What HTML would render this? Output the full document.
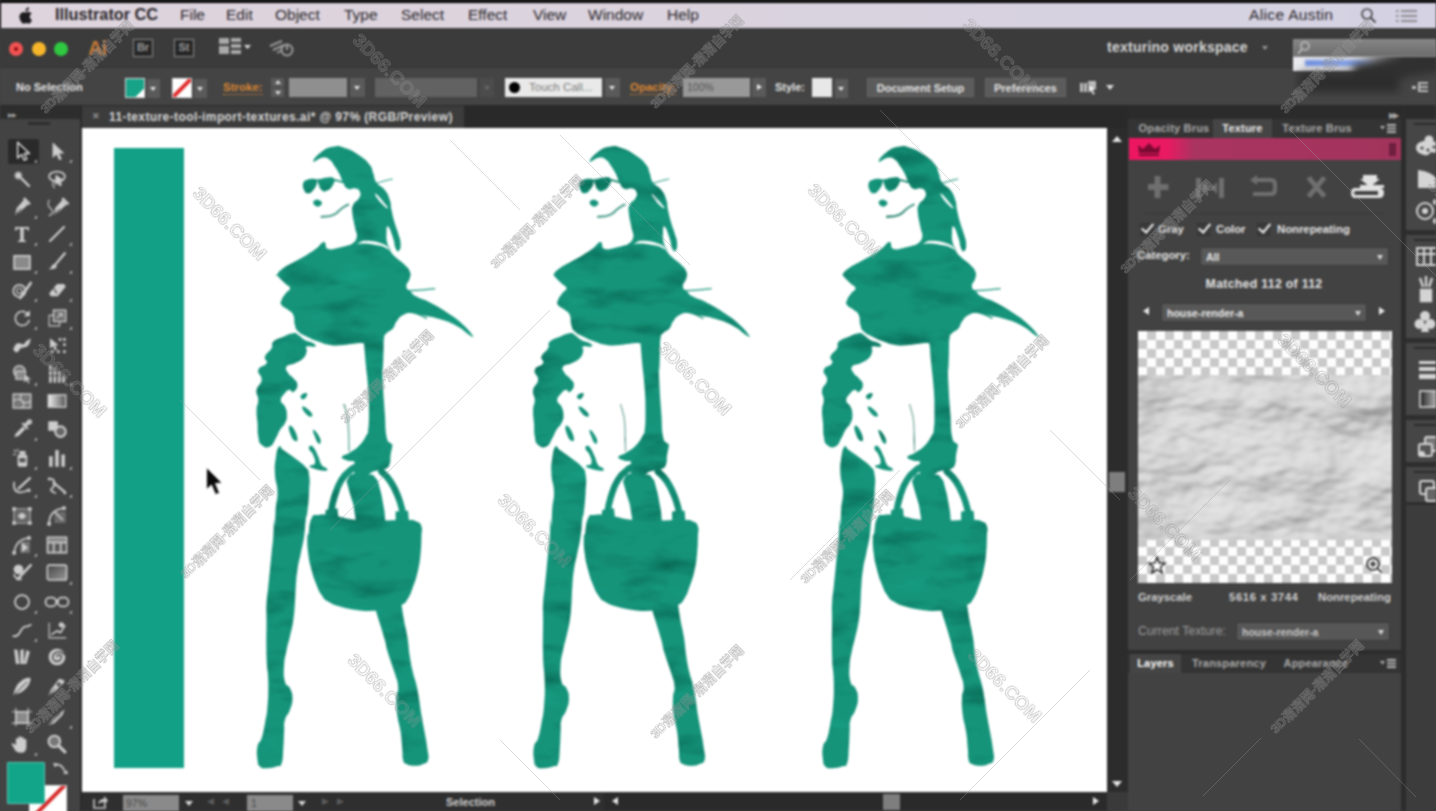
<!DOCTYPE html>
<html>
<head>
<meta charset="utf-8">
<title>Illustrator CC</title>
<style>
*{box-sizing:border-box;margin:0;padding:0}
html,body{width:1436px;height:811px;overflow:hidden;background:#3f3f3f;font-family:"Liberation Sans",sans-serif;}
body{position:relative}
#wrap{position:absolute;left:-20px;top:-20px;width:1476px;height:851px;background:#3f3f3f;filter:blur(1px)}
#root{position:absolute;left:20px;top:20px;width:1436px;height:811px;overflow:visible}
.abs{position:absolute}
#topblack{left:0;top:0;width:1436px;height:28px;background:#050505}
#menubar{left:1px;top:3px;width:1435px;height:25px;background:linear-gradient(90deg,#ded4dd 0,#dbd3de 45%,#d4d2e3 100%);color:#2a272b;font-size:15.5px;}
#menubar span{position:absolute;top:3px;white-space:nowrap}
#menubar span.b{font-size:16.3px;top:2px}
#appbar{left:0;top:28px;width:1436px;height:39px;background:#3b3b3b}
#ctrlbar{left:0;top:67px;width:1436px;height:38px;background:#444444;border-top:1px solid #333}
#tabrow{left:0;top:105px;width:1436px;height:23px;background:#292929}
#tab{left:82px;top:106px;width:382px;height:22px;background:#3c3c3c;color:#d8d8d8;font-size:11px;font-weight:bold}
#toolbar{left:0;top:119px;width:80px;height:692px;background:#434343}
#toolhead{left:0;top:106px;width:80px;height:13px;background:#2d2d2d}
#canvas{left:82px;top:128px;width:1025px;height:664px;background:#fff;overflow:hidden}
#vscroll{left:1107px;top:128px;width:21px;height:664px;background:#2c2c2c}
#status{left:82px;top:792px;width:1046px;height:19px;background:#2f2f2f}
#rpanel{left:1128px;top:106px;width:273px;height:705px;background:#424242}
#dock{left:1401px;top:106px;width:35px;height:705px;background:#464646;border-left:5px solid #2c2c2c;overflow:hidden}
.ibox{width:20px;height:18px;border:1.500px solid #8d8d8d;background:#262626;color:#9a9a9a;font-size:11px;font-weight:bold;text-align:center;line-height:15px}
.dd{height:19px;background:#5a5a5a}
.dd::after{content:"";position:absolute;left:50%;top:8px;margin-left:-3.500px;border:3.500px solid transparent;border-top:4.500px solid #e6e6e6;border-bottom:0}
.dd.dim{background:#4c4c4c}.dd.dim::after{border-top-color:#6a6a6a}
.btn{height:19px;background:#5b5b5b;color:#e4e4e4;font-size:11px;font-weight:bold;text-align:center;line-height:19px;white-space:nowrap;border:1px solid #666}
.ptab{height:19px;color:#a9a9a9;font-size:11px;font-weight:bold;text-align:center;line-height:19px;white-space:nowrap;letter-spacing:.2px}
.ptab.act{background:#454545;color:#efefef}
.lbl{color:#e2e2e2;font-size:11.300px;font-weight:bold;white-space:nowrap;line-height:13px}
.cb{width:13px;height:13px;background:#3a3a3a;border:1px solid #333}
.cb::after{content:"";position:absolute;left:3px;top:-3px;width:5px;height:10px;border:solid #f0f0f0;border-width:0 2px 2px 0;transform:rotate(40deg)}
.sel{height:19px;background:#585858;color:#e8e8e8;font-size:10.500px;font-weight:bold;line-height:18px;padding-left:5px;border:1px solid #3a3a3a;border-radius:2px}
.sel::after{content:"";position:absolute;right:5px;top:7px;border:3.500px solid transparent;border-top:5px solid #d8d8d8;border-bottom:0}
.grip{left:8px;width:24px;height:2px;background:#2a2a2a}
</style>
</head>
<body>
<div id="wrap"><div id="root">
<div id="topblack" class="abs"></div>
<div id="menubar" class="abs">
<svg class="abs" style="left:17.500px;top:3.500px" width="14" height="17" viewBox="0 0 17 20"><path d="M12 0q.3 2-1 3.500t-3 1.400q-.2-1.800 1.100-3.300T12 0z M8.300 6.200q1.200 0 2.500-.8 2.800-.3 4.500 2.100-2.400 1.500-2.300 4 .1 2.900 2.900 4.100-1.800 4.300-4 4.300-1 0-2-.5t-2.200 0q-1.300.6-2 .5-2.300-.2-4.200-4.200t-.3-7q1.400-2.500 3.900-2.600 1 0 3.200.1z" fill="#1d1b1e"/></svg>
<svg class="abs" style="left:1359px;top:4px" width="17" height="17" viewBox="0 0 17 17"><circle cx="7" cy="7" r="5" fill="none" stroke="#4a474b" stroke-width="1.700"/><path d="M10.500 10.500l5 5" stroke="#4a474b" stroke-width="2"/></svg>
<svg class="abs" style="left:1395px;top:6px" width="22" height="14" viewBox="0 0 22 14"><g fill="#8e8a90"><rect x="0" y="1" width="2.500" height="2"/><rect x="5" y="1" width="16" height="2"/><rect x="0" y="6" width="2.500" height="2"/><rect x="5" y="6" width="16" height="2"/><rect x="0" y="11" width="2.500" height="2"/><rect x="5" y="11" width="16" height="2"/></g></svg>
<span class="b" style="left:54px;font-weight:bold">Illustrator CC</span>
<span style="left:179px">File</span>
<span style="left:225px">Edit</span>
<span style="left:274px">Object</span>
<span style="left:343px">Type</span>
<span style="left:400px">Select</span>
<span style="left:467px">Effect</span>
<span style="left:532px">View</span>
<span style="left:587px">Window</span>
<span style="left:666px">Help</span>
<span style="left:1248px;letter-spacing:.35px">Alice Austin</span>
</div>
<div id="appbar" class="abs">
<div class="abs" style="left:9px;top:14px;width:14px;height:14px;border-radius:50%;background:#f25353"></div>
<div class="abs" style="left:14px;top:19px;width:4px;height:4px;border-radius:50%;background:#8a1010"></div>
<div class="abs" style="left:31.5px;top:14px;width:14px;height:14px;border-radius:50%;background:#f6b52b"></div>
<div class="abs" style="left:54px;top:14px;width:14px;height:14px;border-radius:50%;background:#2fc840"></div>
<div class="abs" style="left:88px;top:9px;font-size:20px;font-weight:bold;color:#c57a38;letter-spacing:-1px">Ai</div>
<div class="abs ibox" style="left:133px;top:11px">Br</div>
<div class="abs ibox" style="left:174px;top:11px">St</div>
<svg class="abs" style="left:219px;top:9px" width="36" height="20" viewBox="0 0 36 20"><g fill="#a9a9a9"><rect x="0" y="1" width="10" height="6"/><rect x="0" y="9" width="10" height="8"/><rect x="12" y="1" width="10" height="4"/><rect x="12" y="7" width="10" height="4"/><rect x="12" y="13" width="10" height="4"/></g><path d="M25 8h7l-3.500 4z" fill="#ddd"/></svg>
<svg class="abs" style="left:268px;top:9px" width="28" height="22" viewBox="0 0 28 22"><g fill="none" stroke="#9a9a9a" stroke-width="2"><path d="M2 9 L14 4 M5 13 L16 8 M9 16 L14 13"/><circle cx="19" cy="13" r="5.500"/><path d="M19 7v6"/></g></svg>
<div class="abs" style="left:1107px;top:11px;font-size:14px;font-weight:bold;color:#d6d6d6;letter-spacing:0.25px;white-space:nowrap">texturino workspace</div>
<div class="abs" style="left:1262px;top:18px;border:3px solid transparent;border-top:4px solid #999"></div>
<div class="abs" style="left:1293px;top:11px;width:143px;height:18px;background:linear-gradient(#858585,#6c6c6c);border:1px solid #8d8d8d"></div>
<svg class="abs" style="left:1296px;top:12px" width="16" height="16" viewBox="0 0 16 16"><circle cx="9" cy="6" r="4" fill="none" stroke="#bbb" stroke-width="1.600"/><path d="M6 9L2 14" stroke="#bbb" stroke-width="2"/></svg>
</div>
<div id="ctrlbar" class="abs">
<div class="abs" style="left:16px;top:13px;font-size:11px;font-weight:bold;color:#e6e6e6;white-space:nowrap">No Selection</div>
<div class="abs" style="left:125px;top:10px;width:20px;height:20px;background:linear-gradient(135deg,#16a387 0,#16a387 76%,#fff 76%);border:1px solid #ddd"></div>
<div class="abs dd" style="left:147px;top:11px;width:13px"></div>
<div class="abs" style="left:172px;top:10px;width:20px;height:20px;background:#fff;border:1px solid #ddd;overflow:hidden"><div class="abs" style="left:-5px;top:7px;width:28px;height:4px;background:#e02a2a;transform:rotate(-45deg)"></div></div>
<div class="abs dd" style="left:194px;top:11px;width:13px"></div>
<div class="abs" style="left:223px;top:13px;font-size:11.500px;font-weight:bold;color:#d98632;border-bottom:1px dotted #d98632;line-height:13px">Stroke:</div>
<div class="abs" style="left:271px;top:10px;width:13px;height:9px;background:#5a5a5a"></div><div class="abs" style="left:274.500px;top:12px;border:3px solid transparent;border-bottom:4px solid #ddd;border-top:0"></div>
<div class="abs" style="left:271px;top:20px;width:13px;height:9px;background:#5a5a5a"></div><div class="abs" style="left:274.500px;top:23px;border:3px solid transparent;border-top:4px solid #ddd;border-bottom:0"></div>
<div class="abs" style="left:289px;top:10px;width:58px;height:19px;background:#8f8f8f"></div>
<div class="abs dd" style="left:350px;top:10px;width:15px"></div>
<div class="abs" style="left:375px;top:10px;width:102px;height:19px;background:#626262"></div>
<div class="abs dd dim" style="left:480px;top:10px;width:14px"></div>
<div class="abs" style="left:505px;top:10px;width:97px;height:19px;background:#e9e9e9;color:#7a7a7a;font-size:11.500px;line-height:19px;padding-left:24px;white-space:nowrap;overflow:hidden">Touch Call...</div>
<div class="abs" style="left:508.500px;top:14px;width:11px;height:11px;border-radius:50%;background:#000"></div>
<div class="abs dd" style="left:605px;top:10px;width:15px"></div>
<div class="abs" style="left:630px;top:13px;font-size:11.500px;font-weight:bold;color:#d98632;border-bottom:1px dotted #d98632;line-height:13px">Opacity:</div>
<div class="abs" style="left:683px;top:10px;width:67px;height:19px;background:#999;color:#555;font-size:10.500px;line-height:19px;padding-left:4px">100%</div>
<div class="abs" style="left:752px;top:10px;width:14px;height:19px;background:#5a5a5a"></div><div class="abs" style="left:757px;top:16px;border:3.500px solid transparent;border-left:5px solid #eee;border-right:0"></div>
<div class="abs" style="left:775px;top:13px;font-size:11px;font-weight:bold;color:#e6e6e6">Style:</div>
<div class="abs" style="left:812px;top:10px;width:20px;height:19px;background:#e8e8e8"></div>
<div class="abs dd" style="left:835px;top:11px;width:13px"></div>
<div class="abs btn" style="left:867px;top:10px;width:107px">Document Setup</div>
<div class="abs btn" style="left:985px;top:10px;width:81px">Preferences</div>
<svg class="abs" style="left:1080px;top:11px" width="40" height="18" viewBox="0 0 40 18"><g fill="#bdbdbd"><rect x="0" y="4" width="3" height="9"/><rect x="4" y="4" width="3" height="9"/><rect x="8" y="2" width="8" height="8"/><path d="M9 5l8 5-4 1 2 4-2 1-2-4-3 2z" fill="#eee" stroke="#444" stroke-width=".5"/><path d="M26 6h8l-4 5z" fill="#ddd"/></g></svg>
<svg class="abs" style="left:1412px;top:13px" width="18" height="14" viewBox="0 0 18 14"><g fill="#bdbdbd"><rect x="0" y="5" width="4" height="3"/><rect x="6" y="1" width="10" height="2"/><rect x="6" y="5" width="10" height="2"/><rect x="6" y="9" width="10" height="2"/><rect x="6" y="1" width="2" height="10"/></g></svg>
</div>
<div class="abs" style="left:1293px;top:57px;width:143px;height:40px;overflow:hidden">
<div class="abs" style="left:0;top:0;width:112px;height:14px;background:linear-gradient(90deg,#e9e9ee,#d4d6de 60%,rgba(150,150,150,0))"></div>
<div class="abs" style="left:12px;top:3px;width:72px;height:6px;background:linear-gradient(90deg,#6e8fe0,#8aa6ea 75%,rgba(140,150,180,0));filter:blur(1px)"></div>
<div class="abs" style="left:60px;top:-2px;width:110px;height:22px;background:#303030;filter:blur(4px);transform:rotate(-10deg)"></div>
<div class="abs" style="left:6px;top:16px;width:100px;height:19px;background:#2d2d2d;filter:blur(4px)"></div>
</div>
<div id="tabrow" class="abs"></div>
<div id="tab" class="abs"><span class="abs" style="left:10px;top:5px;font-size:9px;color:#999">&#10005;</span><span class="abs" style="left:27px;top:4px;white-space:nowrap;font-size:12px;letter-spacing:.4px">11-texture-tool-import-textures.ai* @ 97% (RGB/Preview)</span></div>
<div id="toolhead" class="abs"></div>
<div id="toolbar" class="abs"></div>
<div class="abs" style="left:80px;top:106px;width:2px;height:705px;background:#2a2a2a"></div>
<div class="abs" style="left:8px;top:111px;font-size:6px;color:#aaa;letter-spacing:-1px">&#9654;&#9654;</div>
<div class="abs" style="left:28px;top:122px;width:22px;height:3px;background:#2e2e2e"></div>
<svg class="abs" style="left:0;top:0" width="82" height="811" viewBox="0 0 82 811"><rect x="8" y="139" width="31" height="25" rx="2" fill="#2a2a2a"/><g transform="translate(11.5,140.5) scale(0.875)"><path d="M7 2v18l4.500-4 3 6.500 3-1.300-3-6.300h6z" fill="#1c1c1c" stroke="#e4e4e4" stroke-width="1.600" stroke-linejoin="round"/></g><path d="M37 159.5v3h-3z" fill="#c8c8c8"/><g transform="translate(46.5,140.5) scale(0.875)"><path d="M7 2v18l4.500-4 3 6.500 3-1.300-3-6.300h6z" fill="#cdcdcd"/></g><path d="M72 159.5v3h-3z" fill="#c8c8c8"/><g transform="translate(11.5,168.5) scale(0.875)"><path d="M6 3l1.500 3.500 3.500-1.500-1.500 3.500 3.500 1.500-3.500 1.500 1.500 3.500-3.500-1.500-1.500 3.500-1.500-3.500-3.500 1.500 1.500-3.500-3.500-1.500 3.500-1.500-1.500-3.500 3.500 1.500z" fill="#cdcdcd" transform="translate(3,0) scale(.8)"/><path d="M11 11l9 9" stroke="#cdcdcd" stroke-width="2.600" stroke-linecap="round"/></g><g transform="translate(46.5,168.5) scale(0.875)"><ellipse cx="12" cy="9" rx="9" ry="5.500" fill="none" stroke="#cdcdcd" stroke-width="2" stroke-linecap="round" stroke-linejoin="round"/><path d="M8 14q-2 5 1 8M11 8l8 6-4 .5 2 4-2 1-2-4-2.500 2.500z" fill="none" stroke="#cdcdcd" stroke-width="1.3" stroke-linecap="round" stroke-linejoin="round" /><path d="M11 8l8 6-4 .5 2 4-2 1-2-4-2.500 2.500z" fill="#cdcdcd"/></g><g transform="translate(11.5,196.5) scale(0.875)"><path d="M4 21l2-8 8-9 5 5-9 8z" fill="#cdcdcd"/><path d="M5 20l6-6" stroke="#434343" stroke-width="1.200"/><path d="M14 2l7 7" stroke="#cdcdcd" stroke-width="3"/></g><path d="M37 215.5v3h-3z" fill="#c8c8c8"/><g transform="translate(46.5,196.5) scale(0.875)"><g transform="translate(4,0)"><path d="M4 21l2-8 8-9 5 5-9 8z" fill="#cdcdcd"/><path d="M5 20l6-6" stroke="#434343" stroke-width="1.200"/><path d="M14 2l7 7" stroke="#cdcdcd" stroke-width="3"/></g><path d="M3 4q-3 6 2 10t-2 8" fill="none" stroke="#cdcdcd" stroke-width="1.3" stroke-linecap="round" stroke-linejoin="round"/></g><g transform="translate(11.5,223.5) scale(0.875)"><path d="M4 4h16v4h-1.500l-.8-2h-3.700v13l2.500.8v1.200h-9v-1.200l2.500-.8v-13h-3.700l-.8 2h-1.500z" fill="#cdcdcd"/></g><path d="M37 242.5v3h-3z" fill="#c8c8c8"/><g transform="translate(46.5,223.5) scale(0.875)"><path d="M4 20L20 4" stroke="#cdcdcd" stroke-width="2.400" stroke-linecap="round"/></g><path d="M72 242.5v3h-3z" fill="#c8c8c8"/><g transform="translate(11.5,251.5) scale(0.875)"><rect x="3" y="5" width="18" height="15" fill="#8a8a8a" stroke="#cdcdcd" stroke-width="2"/></g><path d="M37 270.5v3h-3z" fill="#c8c8c8"/><g transform="translate(46.5,251.5) scale(0.875)"><path d="M21 2L10 15" stroke="#cdcdcd" stroke-width="2.600" stroke-linecap="round"/><path d="M9 14l3 3q-2 4-10 3 4-1 4-4z" fill="#cdcdcd"/></g><path d="M72 270.5v3h-3z" fill="#c8c8c8"/><g transform="translate(11.5,279.5) scale(0.875)"><circle cx="9" cy="13" r="7" fill="none" stroke="#cdcdcd" stroke-width="2" stroke-linecap="round" stroke-linejoin="round"/><circle cx="9" cy="13" r="3" fill="none" stroke="#cdcdcd" stroke-width="1.3" stroke-linecap="round" stroke-linejoin="round"/><path d="M22 4L10 21" stroke="#cdcdcd" stroke-width="3" stroke-linecap="round"/></g><path d="M37 298.5v3h-3z" fill="#c8c8c8"/><g transform="translate(46.5,279.5) scale(0.875)"><path d="M3 16l9-11h8l2 3-9 11h-8z" fill="#cdcdcd"/><path d="M8 10l4 6" stroke="#434343" stroke-width="1.500"/></g><path d="M72 298.5v3h-3z" fill="#c8c8c8"/><g transform="translate(11.5,307.5) scale(0.875)"><path d="M19 8a8 8 0 1 0 1 7" fill="none" stroke="#cdcdcd" stroke-width="2" stroke-linecap="round" stroke-linejoin="round" stroke-dasharray="3 2"/><path d="M21 3v7h-7z" fill="#cdcdcd"/></g><path d="M37 326.5v3h-3z" fill="#c8c8c8"/><g transform="translate(46.5,307.5) scale(0.875)"><rect x="3" y="9" width="12" height="12" fill="none" stroke="#cdcdcd" stroke-width="1.3" stroke-linecap="round" stroke-linejoin="round"/><rect x="8" y="3" width="14" height="13" fill="#6a6a6a" stroke="#cdcdcd" stroke-width="1.600"/><path d="M12 12l6-5M18 7v4M18 7h-4" fill="none" stroke="#cdcdcd" stroke-width="1.3" stroke-linecap="round" stroke-linejoin="round"/></g><path d="M72 326.5v3h-3z" fill="#c8c8c8"/><g transform="translate(11.5,335.5) scale(0.875)"><path d="M2 16q3-9 8-7t5 0 7-6q-1 9-6 10t-5 1-4 5q-3 1-5-3z" fill="#cdcdcd"/></g><g transform="translate(46.5,335.5) scale(0.875)"><path d="M4 3v12l3.500-3 2 5 2.500-1-2-5h4z" fill="#cdcdcd"/><g fill="#cdcdcd"><rect x="14" y="3" width="3" height="3"/><rect x="19" y="3" width="3" height="3"/><rect x="19" y="9" width="3" height="3"/><rect x="19" y="17" width="3" height="3"/><rect x="12" y="17" width="3" height="3"/><rect x="5" y="17" width="3" height="3"/></g></g><g transform="translate(11.5,363.5) scale(0.875)"><circle cx="9" cy="9" r="6.500" fill="#777" stroke="#cdcdcd" stroke-width="1.600"/><rect x="5" y="9" width="11" height="9" fill="#8b8b8b" stroke="#cdcdcd" stroke-width="1.400"/><path d="M14 11v11l3-2.500 2 3.500 2-1-2-3.500h4z" fill="#cdcdcd" stroke="#434343" stroke-width=".6"/></g><path d="M37 382.5v3h-3z" fill="#c8c8c8"/><g transform="translate(46.5,363.5) scale(0.875)"><g fill="#cdcdcd"><path d="M3 2h3v20h-3zM8 5h3v17h-3zM13 9h3v13h-3zM18 13h3v9h-3z"/></g><path d="M3 8h18M3 14h18" stroke="#434343" stroke-width="1.200"/></g><path d="M72 382.5v3h-3z" fill="#c8c8c8"/><g transform="translate(11.5,390.5) scale(0.875)"><rect x="2" y="4" width="20" height="16" fill="#777" stroke="#cdcdcd" stroke-width="1.600"/><path d="M2 12q5-4 10 0t10 0M12 4q-4 4 0 8t0 8" fill="none" stroke="#cdcdcd" stroke-width="1.3" stroke-linecap="round" stroke-linejoin="round"/></g><g transform="translate(46.5,390.5) scale(0.875)"><defs><linearGradient id="tg1"><stop offset="0" stop-color="#eee"/><stop offset="1" stop-color="#555"/></linearGradient></defs><rect x="2" y="5" width="20" height="14" fill="url(#tg1)" stroke="#cdcdcd" stroke-width="1.600"/></g><g transform="translate(11.5,418.5) scale(0.875)"><path d="M3 21l2-4 8-8 3 3-8 8z" fill="#cdcdcd"/><path d="M13 6l5 5M15 8l5-6q3 0 2 3z" stroke="#cdcdcd" stroke-width="2.500" stroke-linecap="round"/></g><path d="M37 437.5v3h-3z" fill="#c8c8c8"/><g transform="translate(46.5,418.5) scale(0.875)"><rect x="2" y="3" width="11" height="11" rx="1" fill="#cdcdcd"/><circle cx="16" cy="15" r="6" fill="#666" stroke="#cdcdcd" stroke-width="2.400"/></g><g transform="translate(11.5,447.5) scale(0.875)"><rect x="7" y="8" width="11" height="14" rx="2" fill="#cdcdcd"/><rect x="9" y="4" width="7" height="4" fill="#cdcdcd"/><path d="M3 3l2 2M2 8h3M7 2v2" fill="none" stroke="#cdcdcd" stroke-width="1.3" stroke-linecap="round" stroke-linejoin="round"/><rect x="9" y="12" width="7" height="5" fill="#555"/></g><path d="M37 466.5v3h-3z" fill="#c8c8c8"/><g transform="translate(46.5,447.5) scale(0.875)"><g fill="#cdcdcd"><rect x="3" y="10" width="4" height="12"/><rect x="10" y="3" width="4" height="19"/><rect x="17" y="8" width="4" height="14"/></g></g><path d="M72 466.5v3h-3z" fill="#c8c8c8"/><g transform="translate(11.5,475.5) scale(0.875)"><path d="M21 3L8 15" stroke="#cdcdcd" stroke-width="2.600" stroke-linecap="round"/><path d="M3 8q-1 10 5 11t12-3" fill="none" stroke="#cdcdcd" stroke-width="2" stroke-linecap="round" stroke-linejoin="round"/><circle cx="20" cy="17" r="1.800" fill="#cdcdcd"/></g><path d="M37 494.5v3h-3z" fill="#c8c8c8"/><g transform="translate(46.5,475.5) scale(0.875)"><path d="M3 4q6-1 6 4t-3 7 4 5" fill="none" stroke="#cdcdcd" stroke-width="2" stroke-linecap="round" stroke-linejoin="round"/><path d="M8 8l13 11" stroke="#cdcdcd" stroke-width="2.600" stroke-linecap="round"/><circle cx="21" cy="20" r="1.600" fill="#cdcdcd"/><circle cx="3" cy="4" r="1.600" fill="#cdcdcd"/></g><path d="M72 494.5v3h-3z" fill="#c8c8c8"/><g transform="translate(11.5,505.5) scale(0.875)"><rect x="3" y="4" width="18" height="16" fill="none" stroke="#cdcdcd" stroke-width="1.3" stroke-linecap="round" stroke-linejoin="round"/><g fill="#cdcdcd"><rect x="1" y="2" width="4" height="4"/><rect x="19" y="2" width="4" height="4"/><rect x="1" y="18" width="4" height="4"/><rect x="19" y="18" width="4" height="4"/><path d="M12 8l5 4-5 4-5-4z"/></g><rect x="5" y="6" width="14" height="12" fill="#6c6c6c"/><path d="M12 8l5 4-5 4-5-4z" fill="#cdcdcd"/></g><g transform="translate(46.5,505.5) scale(0.875)"><rect x="9" y="7" width="13" height="13" fill="#6c6c6c"/><path d="M3 21q0-16 17-18" fill="none" stroke="#cdcdcd" stroke-width="2" stroke-linecap="round" stroke-linejoin="round"/><path d="M10 8l8 8" fill="none" stroke="#cdcdcd" stroke-width="2" stroke-linecap="round" stroke-linejoin="round"/><g fill="#cdcdcd"><rect x="1" y="19" width="4" height="4"/><rect x="18" y="1" width="4" height="4"/></g></g><g transform="translate(11.5,534.5) scale(0.875)"><rect x="10" y="8" width="11" height="13" fill="#777"/><path d="M3 21q2-16 17-17" fill="none" stroke="#cdcdcd" stroke-width="2" stroke-linecap="round" stroke-linejoin="round"/><path d="M12 9v11l7-5z" fill="#cdcdcd"/><g fill="#cdcdcd"><rect x="1" y="19" width="4" height="4"/><rect x="18" y="2" width="4" height="4"/></g></g><path d="M37 553.5v3h-3z" fill="#c8c8c8"/><g transform="translate(46.5,534.5) scale(0.875)"><rect x="1" y="3" width="22" height="18" fill="#888" stroke="#cdcdcd" stroke-width="1.600"/><path d="M1 9h22M8 9v12M16 9v12" stroke="#cdcdcd" stroke-width="1.600"/><rect x="3" y="11" width="4" height="8" fill="#555"/><rect x="10" y="11" width="5" height="8" fill="#555"/><rect x="18" y="11" width="4" height="8" fill="#555"/></g><g transform="translate(11.5,562.5) scale(0.875)"><circle cx="8" cy="8" r="5.500" fill="#cdcdcd"/><path d="M22 3L7 19" stroke="#cdcdcd" stroke-width="2.800" stroke-linecap="round"/><path d="M3 14q2 6 8 5" fill="none" stroke="#cdcdcd" stroke-width="2" stroke-linecap="round" stroke-linejoin="round"/></g><g transform="translate(46.5,562.5) scale(0.875)"><defs><linearGradient id="tg2" x1="0" y1="0" x2="1" y2="1"><stop offset="0" stop-color="#444"/><stop offset="1" stop-color="#999"/></linearGradient></defs><rect x="1" y="3" width="22" height="17" rx="2" fill="url(#tg2)" stroke="#cdcdcd" stroke-width="1.800"/></g><path d="M72 581.5v3h-3z" fill="#c8c8c8"/><g transform="translate(11.5,591.5) scale(0.875)"><circle cx="12" cy="12" r="8" fill="none" stroke="#cdcdcd" stroke-width="2" stroke-linecap="round" stroke-linejoin="round"/></g><path d="M37 610.5v3h-3z" fill="#c8c8c8"/><g transform="translate(46.5,591.5) scale(0.875)"><rect x="-1" y="7" width="12" height="10" rx="4.500" fill="none" stroke="#cdcdcd" stroke-width="2" stroke-linecap="round" stroke-linejoin="round"/><rect x="13" y="7" width="12" height="10" rx="4.500" fill="none" stroke="#cdcdcd" stroke-width="2" stroke-linecap="round" stroke-linejoin="round"/><path d="M11 10h2" fill="none" stroke="#cdcdcd" stroke-width="2" stroke-linecap="round" stroke-linejoin="round"/></g><path d="M72 610.5v3h-3z" fill="#c8c8c8"/><g transform="translate(11.5,619.5) scale(0.875)"><path d="M2 19q5 1 8-5t6-6 6-2" fill="none" stroke="#cdcdcd" stroke-width="2" stroke-linecap="round" stroke-linejoin="round"/></g><path d="M37 638.5v3h-3z" fill="#c8c8c8"/><g transform="translate(46.5,619.5) scale(0.875)"><path d="M3 4v17h19" fill="none" stroke="#cdcdcd" stroke-width="1.3" stroke-linecap="round" stroke-linejoin="round"/><path d="M6 17l6-4 4 2 5-8" fill="none" stroke="#cdcdcd" stroke-width="2" stroke-linecap="round" stroke-linejoin="round"/><circle cx="17" cy="6" r="3" fill="#cdcdcd"/></g><g transform="translate(11.5,646.5) scale(0.875)"><path d="M3 3l4 1 2 16h-4zM10 4l4-1v17h-4zM17 4l4 2-4 14h-3z" fill="#cdcdcd"/></g><g transform="translate(46.5,646.5) scale(0.875)"><circle cx="12" cy="12" r="9.500" fill="#cdcdcd"/><path d="M12 12a2.500 2.500 0 0 1 5 0a5 5 0 0 1-10 0a7.500 7.500 0 0 1 14 -2" fill="none" stroke="#4a4a4a" stroke-width="1.800"/></g><g transform="translate(11.5,676.5) scale(0.875)"><path d="M2 22q2-12 9-17t11-3q-1 8-7 13t-11 5z" fill="#cdcdcd"/><path d="M3 21L18 6" stroke="#555" stroke-width="1.200"/></g><g transform="translate(46.5,676.5) scale(0.875)"><path d="M2 22l3-7 9-12q5-1 7 3l-11 11z" fill="#cdcdcd"/><circle cx="14" cy="9" r="2.500" fill="#555"/><path d="M3 21l7-7" stroke="#555" stroke-width="1.200"/></g><g transform="translate(11.5,706.5) scale(0.875)"><rect x="5" y="6" width="14" height="13" fill="#8a8a8a" stroke="#cdcdcd" stroke-width="1.400"/><path d="M1 6h22M1 19h22M5 2v20M19 2v20" fill="none" stroke="#cdcdcd" stroke-width="1.3" stroke-linecap="round" stroke-linejoin="round"/></g><g transform="translate(46.5,706.5) scale(0.875)"><path d="M2 21l5-7L21 3l-3 7-9 9z" fill="#cdcdcd"/><path d="M3 20l13-12" stroke="#555" stroke-width="1.200"/></g><path d="M72 725.5v3h-3z" fill="#c8c8c8"/><g transform="translate(11.5,733.5) scale(0.875)"><path d="M5 13V6q1.500-2 3 0v4V4q1.500-2 3 0v6V5q1.500-2 3 0v6V7q1.500-2 3 0v8q0 7-6 7t-8-5l-3-5q1-2 3 0z" fill="#cdcdcd"/></g><path d="M37 752.5v3h-3z" fill="#c8c8c8"/><g transform="translate(46.5,733.5) scale(0.875)"><circle cx="9" cy="9" r="6.500" fill="#777" stroke="#cdcdcd" stroke-width="2.400"/><path d="M14 14l7 7" stroke="#cdcdcd" stroke-width="3.600" stroke-linecap="round"/></g></svg>
<div class="abs" style="left:29px;top:785px;width:38px;height:30px;background:#fff;border:1px solid #ddd;overflow:hidden"><div class="abs" style="left:-8px;top:12px;width:56px;height:4px;background:#d62a2a;transform:rotate(-45deg)"></div></div>
<div class="abs" style="left:7px;top:762px;width:38px;height:42px;background:#12a589;border:1.500px solid #5cc7b3;border-radius:1px"></div>
<svg class="abs" style="left:52px;top:760px" width="18" height="18" viewBox="0 0 18 18"><path d="M3 5q7-2 10 7" fill="none" stroke="#c8c8c8" stroke-width="1.600"/><path d="M1 3l5 .5-3 4zM16 14l-5 0 4-4z" fill="#c8c8c8"/></svg>
<div id="canvas" class="abs">
<div class="abs" style="left:32px;top:20px;width:70px;height:620px;background:#12a186"></div>
<svg class="abs" style="left:-82px;top:-128px" width="1436" height="811" viewBox="0 0 1436 811">
<defs><symbol id="fig" overflow="visible"><path d="M313.2,161.6 C312.8,160.1 316.3,155.7 321.6,151.7 C326.9,147.7 327.0,147.7 333.2,146.7 C339.4,145.7 337.8,145.6 344.9,148.0 C352.0,150.4 353.2,151.3 359.8,155.8 C366.4,160.3 366.2,160.3 369.8,165.0 C373.4,169.7 371.4,168.7 373.2,173.3 C375.0,177.9 373.4,178.0 376.5,182.4 C379.6,186.8 381.3,185.2 384.8,189.9 C388.3,194.6 388.0,194.6 389.8,199.9 C391.6,205.2 390.2,203.7 391.5,209.9 C392.8,216.1 393.0,217.0 394.8,223.2 C396.6,229.4 396.6,227.9 398.1,233.2 C399.6,238.5 400.4,238.5 400.6,243.2 C400.8,247.9 400.3,249.4 399.0,250.7 C397.7,252.0 397.2,251.5 395.6,248.2 C394.0,244.9 395.1,244.0 393.1,238.2 C391.1,232.4 389.9,227.9 388.1,226.6 C386.3,225.3 386.7,228.8 386.5,233.2 C386.3,237.6 386.2,238.7 387.3,243.2 C388.4,247.7 391.7,249.7 390.6,249.9 C389.5,250.1 389.5,246.5 383.1,244.0 C376.7,241.5 373.6,240.7 366.5,240.7 C359.4,240.7 360.9,242.7 356.5,244.0 C352.1,245.3 349.9,247.2 349.9,245.7 C349.9,244.2 355.2,243.3 356.5,238.2 C357.8,233.1 355.9,233.3 354.8,226.6 C353.7,219.9 352.8,219.0 352.4,213.2 C352.0,207.4 351.4,208.9 353.2,204.9 C355.0,200.9 357.2,201.8 359.0,198.3 C360.8,194.8 360.9,194.3 359.8,191.6 C358.7,188.9 358.1,189.1 354.8,188.3 C351.5,187.5 350.7,190.6 347.4,188.6 C344.1,186.6 344.4,184.4 342.4,180.8 C340.4,177.2 341.9,178.8 339.9,175.0 C337.9,171.2 337.6,170.6 334.9,166.6 C332.2,162.6 333.0,162.4 329.9,160.0 C326.8,157.6 327.7,157.1 323.2,157.5 C318.7,157.9 313.6,163.1 313.2,161.6Z"/><path d="M303.2,183.6 C303.9,180.9 303.5,181.1 306.6,179.9 C309.7,178.7 312.2,178.3 314.9,179.1 C317.6,179.9 317.4,180.0 316.9,182.9 C316.4,185.8 315.5,187.1 313.2,189.9 C310.9,192.7 310.6,193.3 308.2,193.3 C305.8,193.3 305.4,192.5 304.1,189.9 C302.8,187.3 302.5,186.3 303.2,183.6Z"/><path d="M319.1,180.3 C321.5,178.2 324.2,177.8 328.2,177.5 C332.2,177.2 332.9,176.9 334.0,179.1 C335.1,181.3 334.4,182.7 332.4,185.8 C330.4,188.9 329.5,189.7 326.6,190.8 C323.7,191.9 323.6,191.4 321.6,189.9 C319.6,188.4 319.8,187.9 319.1,185.3 C318.4,182.7 316.7,182.4 319.1,180.3Z"/><path d="M313.2,202.4 C313.1,200.7 314.1,200.5 315.7,199.9 C317.3,199.3 317.4,199.5 319.1,200.3 C320.8,201.1 321.7,201.5 321.9,202.9 C322.1,204.3 321.4,204.8 319.9,205.7 C318.4,206.6 318.0,207.1 316.2,206.2 C314.4,205.3 313.3,204.1 313.2,202.4Z"/><path d="M321.6,243.3 C323.8,241.8 323.1,241.0 324.9,242.5 C326.7,244.0 324.2,247.8 328.2,249.1 C332.2,250.4 334.1,248.6 339.9,247.5 C345.7,246.4 344.6,246.0 349.9,245.0 C355.2,244.0 353.6,243.8 359.8,243.7 C366.0,243.6 366.1,243.3 373.2,244.5 C380.3,245.7 380.7,245.1 386.5,248.3 C392.3,251.5 389.9,252.1 394.8,256.6 C399.7,261.1 400.8,261.0 404.8,265.0 C408.8,269.0 408.5,268.1 409.8,271.6 C411.1,275.1 410.7,274.3 409.8,278.3 C408.9,282.3 406.0,282.8 406.4,286.6 C406.8,290.4 408.7,289.7 411.4,292.4 C414.1,295.1 411.1,293.7 416.4,296.6 C421.7,299.5 422.9,298.8 431.4,303.2 C439.9,307.6 440.1,307.9 448.1,313.2 C456.1,318.5 455.0,317.4 461.4,323.2 C467.8,329.0 470.1,331.8 472.2,334.9 C474.3,338.0 473.6,337.4 469.4,334.9 C465.2,332.4 464.3,329.9 456.4,325.7 C448.5,321.5 448.6,321.9 439.7,319.1 C430.8,316.3 430.2,316.8 423.1,315.2 C416.0,313.6 418.4,313.3 413.1,313.2 C407.8,313.1 407.5,312.7 403.1,314.9 C398.7,317.1 399.2,318.1 396.5,321.6 C393.8,325.1 395.8,325.1 393.1,328.2 C390.4,331.3 388.9,330.5 386.5,333.2 C384.1,335.9 384.8,333.3 384.0,338.2 C383.2,343.1 383.8,343.0 383.5,351.5 C383.2,360.0 383.1,366.9 382.8,370.0 C382.5,373.1 382.2,358.4 382.3,363.3 C382.4,368.2 382.4,375.0 383.1,388.3 C383.8,401.6 383.9,400.3 384.8,413.2 C385.7,426.1 385.0,428.5 386.5,436.5 C388.0,444.5 389.1,440.9 390.6,443.2 C392.1,445.5 392.3,441.9 392.3,445.0 C392.3,448.1 391.3,450.1 390.6,455.0 C389.9,459.9 390.9,459.8 389.8,463.3 C388.7,466.8 389.2,466.5 386.5,468.3 C383.8,470.1 383.3,469.0 379.8,469.9 C376.3,470.8 376.7,470.3 373.2,471.6 C369.7,472.9 371.0,474.4 366.5,474.9 C362.0,475.4 360.9,475.1 356.5,473.3 C352.1,471.5 350.4,471.2 349.9,468.3 C349.4,465.4 355.3,464.5 354.8,462.5 C354.3,460.5 351.5,461.9 348.2,460.8 C344.9,459.7 343.7,459.6 342.4,458.3 C341.1,457.0 341.2,457.3 343.2,455.8 C345.2,454.3 345.5,455.4 349.9,452.5 C354.3,449.6 355.4,449.7 359.8,445.0 C364.2,440.3 364.3,439.0 366.5,435.0 C368.7,431.0 367.5,435.7 368.2,429.9 C368.9,424.1 369.0,424.3 369.0,413.2 C369.0,402.1 369.1,401.6 368.2,388.3 C367.3,375.0 366.8,375.1 365.7,363.3 C364.6,351.5 364.7,349.5 364.0,344.1 C363.3,338.7 365.2,343.4 363.2,343.2 C361.2,343.0 361.8,342.7 356.5,343.2 C351.2,343.7 350.3,344.4 343.2,344.9 C336.1,345.4 336.6,345.8 329.9,344.9 C323.2,344.0 324.4,343.7 318.2,341.5 C312.0,339.3 311.9,339.2 306.6,336.5 C301.3,333.8 301.4,334.6 298.3,331.5 C295.2,328.4 296.2,329.3 294.9,324.9 C293.6,320.5 295.1,318.9 293.3,314.9 C291.5,310.9 291.4,312.6 288.3,309.9 C285.2,307.2 283.4,307.6 281.6,304.9 C279.8,302.2 280.5,303.0 281.6,299.9 C282.7,296.8 283.6,296.4 285.8,293.3 C288.0,290.2 290.1,291.0 289.9,288.3 C289.7,285.6 288.0,286.4 284.9,283.3 C281.8,280.2 280.3,279.1 278.3,276.6 C276.3,274.1 276.2,276.3 277.5,274.1 C278.8,271.9 278.7,271.6 283.3,268.3 C287.9,265.0 288.7,265.1 294.9,261.6 C301.1,258.1 300.8,258.5 306.6,255.0 C312.4,251.5 312.6,251.4 316.6,248.3 C320.6,245.2 319.4,244.8 321.6,243.3Z"/><path d="M293.3,333.3 C289.3,333.8 288.6,334.5 283.3,336.7 C278.0,338.9 276.4,338.6 273.3,341.7 C270.2,344.8 273.8,344.3 271.6,348.3 C269.4,352.3 266.3,352.6 265.0,356.6 C263.7,360.6 268.4,359.8 266.6,363.3 C264.8,366.8 259.6,365.5 258.3,369.9 C257.0,374.3 262.1,374.6 261.6,379.9 C261.1,385.2 257.5,384.6 256.6,389.9 C255.7,395.2 258.3,394.6 258.3,399.9 C258.3,405.2 256.8,403.7 256.6,409.9 C256.4,416.1 257.0,416.1 257.5,423.2 C258.0,430.3 257.2,430.7 258.3,436.5 C259.4,442.3 258.5,442.1 261.6,444.8 C264.7,447.5 266.2,448.3 270.0,446.5 C273.8,444.7 273.2,442.6 275.8,438.2 C278.4,433.8 277.5,433.9 279.9,429.9 C282.3,425.9 283.0,427.2 284.9,423.2 C286.8,419.2 286.9,419.3 286.9,414.9 C286.9,410.5 286.5,410.4 284.9,406.6 C283.3,402.8 281.0,404.0 280.8,400.7 C280.6,397.4 281.9,397.0 284.1,394.1 C286.3,391.2 286.6,390.5 289.1,389.9 C291.6,389.3 291.1,393.2 293.3,391.9 C295.5,390.6 297.4,388.5 297.4,384.9 C297.4,381.3 295.7,381.4 293.3,378.3 C290.9,375.2 290.1,376.4 288.3,373.3 C286.5,370.2 284.8,369.3 286.6,366.6 C288.4,363.9 290.5,365.5 294.9,363.3 C299.3,361.1 300.1,361.4 303.2,358.3 C306.3,355.2 305.7,354.7 306.6,351.6 C307.5,348.5 304.4,347.9 306.6,346.6 C308.8,345.3 313.1,347.5 314.9,346.6 C316.7,345.7 315.9,345.1 313.2,343.3 C310.5,341.5 308.9,342.2 304.9,340.0 C300.9,337.8 301.4,336.8 298.3,335.0 C295.2,333.2 297.3,332.8 293.3,333.3Z"/><path d="M300.8,395.7 C301.9,394.1 305.3,392.7 306.6,393.2 C307.9,393.7 306.8,395.8 305.7,397.4 C304.6,399.0 303.7,399.6 302.4,399.1 C301.1,398.6 299.7,397.3 300.8,395.7Z"/><path d="M303.2,406.6 C305.2,407.0 309.8,410.5 311.6,413.2 C313.4,415.9 311.9,417.0 309.9,416.6 C307.9,416.2 305.9,414.3 304.1,411.6 C302.3,408.9 301.2,406.2 303.2,406.6Z"/><path d="M289.1,426.5 C289.8,424.7 291.1,425.1 293.3,428.2 C295.5,431.3 297.0,434.9 297.4,438.2 C297.8,441.5 296.7,441.6 294.9,440.7 C293.1,439.8 292.3,438.7 290.8,434.9 C289.3,431.1 288.4,428.3 289.1,426.5Z"/><path d="M313.2,429.9 C314.1,429.5 316.2,431.8 318.2,434.9 C320.2,438.0 320.7,439.3 320.7,441.5 C320.7,443.7 319.7,444.5 318.2,443.2 C316.7,441.9 316.2,440.0 314.9,436.5 C313.6,433.0 312.3,430.3 313.2,429.9Z"/><path d="M310.7,445.8 C312.0,445.6 312.1,445.4 314.1,448.3 C316.1,451.2 316.2,452.2 318.2,456.6 C320.2,461.0 319.4,461.8 321.6,464.9 C323.8,468.0 325.7,466.7 326.6,468.3 C327.5,469.9 328.5,470.8 324.9,470.8 C321.3,470.8 317.2,469.6 313.2,468.3 C309.2,467.0 309.4,467.1 309.9,465.8 C310.4,464.5 314.0,466.2 314.9,463.3 C315.8,460.4 314.7,458.8 313.2,455.0 C311.7,451.2 309.8,451.6 309.1,449.1 C308.4,446.6 309.4,446.0 310.7,445.8Z"/><path d="M279.1,446.6 C281.1,444.4 279.1,446.9 283.3,450.0 C287.5,453.1 289.1,453.9 294.9,458.3 C300.7,462.7 301.1,462.2 304.9,466.6 C308.7,471.0 308.0,468.2 309.1,474.9 C310.2,481.6 309.6,481.8 309.1,491.6 C308.6,501.4 308.3,504.0 307.4,511.6 C306.5,519.2 306.6,513.3 305.7,520.0 C304.8,526.7 305.4,527.7 304.1,536.6 C302.8,545.5 302.6,544.4 300.8,553.3 C299.0,562.2 298.7,561.0 297.4,569.9 C296.1,578.8 296.5,577.7 295.8,586.6 C295.1,595.5 295.6,594.3 294.9,603.2 C294.2,612.1 294.6,611.0 293.3,619.9 C292.0,628.8 291.7,628.5 289.9,636.5 C288.1,644.5 288.1,642.4 286.6,650.0 C285.1,657.6 284.6,656.6 284.1,665.0 C283.6,673.4 283.4,675.4 284.9,681.6 C286.4,687.8 287.9,683.8 289.9,688.3 C291.9,692.8 292.4,692.5 292.4,698.3 C292.4,704.1 291.9,704.1 289.9,709.9 C287.9,715.7 286.4,714.1 284.9,719.9 C283.4,725.7 284.5,724.0 284.1,731.5 C283.7,739.0 284.0,739.7 283.3,748.2 C282.6,756.7 283.4,758.3 281.6,763.2 C279.8,768.1 280.6,765.2 276.6,766.5 C272.6,767.8 271.0,768.2 266.6,768.2 C262.2,768.2 262.4,768.7 260.0,766.5 C257.6,764.3 258.2,765.1 257.5,759.8 C256.8,754.5 256.4,752.3 257.5,746.5 C258.6,740.7 259.6,744.4 261.6,738.2 C263.6,732.0 263.4,731.6 265.0,723.2 C266.6,714.8 266.6,717.7 267.5,706.6 C268.4,695.5 268.5,694.9 268.3,681.6 C268.1,668.3 267.1,673.1 266.6,656.6 C266.1,640.1 266.6,634.1 266.6,619.9 C266.6,605.7 266.1,612.1 266.6,603.2 C267.1,594.3 267.4,595.5 268.3,586.6 C269.2,577.7 269.1,578.8 270.0,569.9 C270.9,561.0 270.7,562.2 271.6,553.3 C272.5,544.4 272.6,545.5 273.3,536.6 C274.0,527.7 273.6,523.1 274.1,520.0 C274.6,516.9 274.5,528.0 275.0,524.9 C275.5,521.8 275.1,517.1 275.8,508.2 C276.5,499.3 277.7,500.5 277.5,491.6 C277.3,482.7 275.5,483.8 275.0,474.9 C274.5,466.0 274.7,465.8 275.8,458.3 C276.9,450.8 277.1,448.8 279.1,446.6Z"/><path d="M346.5,481.3 L349.9,474.9 L356.5,472.4 L373.2,474.9 L377.8,480.8 L381.5,494.9 L384.5,511.6 L385.6,524.9 L356.5,524.9 L353.5,504.9 L349.9,493.2Z"/><path d="M311.6,518.2 C314.2,513.3 312.4,515.6 318.2,514.9 C324.0,514.2 323.0,514.4 333.2,515.7 C343.4,517.0 343.6,518.6 356.5,519.9 C369.4,521.2 368.2,520.7 381.5,520.7 C394.8,520.7 397.1,519.7 406.4,519.9 C415.7,520.1 412.4,519.7 416.4,521.5 C420.4,523.3 420.1,522.5 421.4,526.5 C422.7,530.5 421.6,529.5 421.4,536.6 C421.2,543.7 421.5,544.4 420.6,553.3 C419.7,562.2 420.1,561.0 418.1,569.9 C416.1,578.8 415.8,579.1 413.1,586.6 C410.4,594.1 411.2,593.3 408.1,598.2 C405.0,603.1 406.4,602.2 401.5,604.9 C396.6,607.6 397.3,606.7 389.8,608.2 C382.3,609.7 382.1,610.2 373.2,610.7 C364.3,611.2 365.4,611.0 356.5,609.9 C347.6,608.8 347.4,608.8 339.9,606.6 C332.4,604.4 333.1,604.7 328.2,601.6 C323.3,598.5 324.7,599.4 321.6,594.9 C318.5,590.4 319.3,591.6 316.6,584.9 C313.9,578.2 313.8,578.3 311.6,569.9 C309.4,561.5 309.3,562.2 308.2,553.3 C307.1,544.4 307.3,542.0 307.4,536.6 C307.5,531.2 307.5,538.1 308.6,533.2 C309.7,528.3 309.0,523.1 311.6,518.2Z"/><path d="M325.7,509.9 L337.4,508.2 L338.5,518.2 L324.9,519.9Z"/><path d="M395.6,511.6 L408.1,510.7 L408.9,521.5 L395.6,521.5Z"/><path d="M373.2,599.9 C366.8,603.0 373.9,603.7 375.7,609.9 C377.5,616.1 377.4,615.2 379.8,623.2 C382.2,631.2 382.6,631.8 384.8,639.8 C387.0,647.8 385.4,644.4 388.1,653.3 C390.8,662.2 392.1,664.4 394.8,673.3 C397.5,682.2 397.6,679.9 398.1,686.6 C398.6,693.3 396.7,690.8 396.5,698.3 C396.3,705.8 396.2,706.0 397.3,714.9 C398.4,723.8 399.3,722.6 400.6,731.5 C401.9,740.4 401.6,740.7 402.3,748.2 C403.0,755.7 402.0,755.6 403.1,759.8 C404.2,764.0 403.3,762.4 406.4,764.0 C409.5,765.6 410.3,765.7 414.8,765.7 C419.3,765.7 419.6,765.6 423.1,764.0 C426.6,762.4 427.0,764.0 428.1,759.8 C429.2,755.6 428.2,755.3 427.3,748.2 C426.4,741.1 426.4,742.1 424.8,733.2 C423.2,724.3 423.0,724.2 421.4,714.9 C419.8,705.6 420.2,706.3 418.9,698.3 C417.6,690.3 417.9,691.6 416.4,684.9 C414.9,678.2 414.9,680.8 413.1,673.3 C411.3,665.8 411.3,666.4 409.8,656.6 C408.3,646.8 408.9,646.3 407.3,636.5 C405.7,626.7 405.4,628.3 403.9,619.9 C402.4,611.5 402.6,610.7 401.5,604.9 C400.4,599.1 407.3,599.5 399.8,598.2 C392.3,596.9 379.6,596.8 373.2,599.9Z"/><path d="M406.4,290.8 C410.9,290.6 415.6,290.5 423.1,289.9 C430.6,289.3 431.6,288.9 434.7,288.6" fill="none" stroke="currentColor" stroke-width="1.2" stroke-linecap="round"/><path d="M409.8,311.6 C412.5,312.5 415.4,313.1 419.8,314.9 C424.2,316.7 424.6,317.3 426.4,318.2" fill="none" stroke="currentColor" stroke-width="1.4" stroke-linecap="round"/><path d="M375.7,183.6 C378.1,182.9 380.4,182.0 384.8,180.8 C389.2,179.6 390.3,179.6 392.3,179.1" fill="none" stroke="currentColor" stroke-width="1.0" stroke-linecap="round"/><path d="M315.7,180.8 C316.8,180.5 318.8,179.9 319.9,179.6" fill="none" stroke="currentColor" stroke-width="1.5" stroke-linecap="round"/><path d="M333.2,179.6 C336.1,180.3 341.1,181.7 344.0,182.4" fill="none" stroke="currentColor" stroke-width="1.8" stroke-linecap="round"/><path d="M352.4,468.6 C349.5,471.6 346.4,472.0 341.5,479.9 C336.6,487.8 336.9,488.9 334.0,498.2 C331.1,507.5 331.6,510.4 330.7,514.9" fill="none" stroke="currentColor" stroke-width="6.5" stroke-linecap="round"/><path d="M381.5,471.6 C383.9,474.3 386.2,474.9 390.6,481.6 C395.0,488.3 394.8,488.4 398.1,496.6 C401.4,504.8 401.5,508.2 402.8,512.4" fill="none" stroke="currentColor" stroke-width="6.5" stroke-linecap="round"/><path d="M320.7,216.9 C324.0,216.4 327.7,217.1 333.2,214.9 C338.7,212.7 337.3,211.5 341.5,208.6 C345.7,205.7 347.0,205.3 349.0,204.1" fill="none" stroke="#55a392" stroke-width="2.2"/><path d="M344.0,404.1 C344.7,406.5 345.4,408.1 346.5,413.2 C347.6,418.3 347.5,413.0 348.2,423.2 C348.9,433.4 348.8,444.0 349.0,451.5" fill="none" stroke="#86b3a8" stroke-width="1.4"/><path d="M375.2,194.1 C375.4,193.4 375.1,192.7 378.1,195.8 C381.1,198.9 384.0,202.4 386.5,205.7 C389.0,209.0 388.2,208.4 387.3,208.2 C386.4,208.0 385.8,207.5 383.1,204.9 C380.4,202.3 379.4,201.2 377.3,198.3 C375.2,195.4 375.0,194.8 375.2,194.1Z" fill="#fff"/></symbol>
<filter id="crease" x="230" y="130" width="880" height="660" filterUnits="userSpaceOnUse" color-interpolation-filters="sRGB">
<feTurbulence type="fractalNoise" baseFrequency="0.016 0.045" numOctaves="4" seed="5" result="n"/>
<feColorMatrix in="n" type="matrix" values="0 0 0 0 0.02  0 0 0 0 0.36  0 0 0 0 0.29  1.7 0 0 0 -0.86" result="dk"/>
<feComposite in="dk" in2="SourceGraphic" operator="in" result="d2"/>
<feColorMatrix in="n" type="matrix" values="0 0 0 0 0.1  0 0 0 0 0.68  0 0 0 0 0.56  0 -1.4 0 0 0.52" result="lt"/>
<feComposite in="lt" in2="SourceGraphic" operator="in" result="l2"/>
<feMerge><feMergeNode in="SourceGraphic"/><feMergeNode in="l2"/><feMergeNode in="d2"/></feMerge>
</filter></defs>
<g fill="#15947a" color="#15947a" filter="url(#crease)">
<use href="#fig" x="0" y="0"/>
<use href="#fig" x="276.500" y="0"/>
<use href="#fig" x="565.500" y="0"/>
</g>
</svg>
</div>
<div id="vscroll" class="abs">
<div class="abs" style="left:5px;top:8px;border:5px solid transparent;border-bottom:6px solid #e6e6e6;border-top:0"></div>
<div class="abs" style="left:2px;top:344px;width:16px;height:20px;background:#7e7e7e"></div>
<div class="abs" style="left:5px;top:653px;border:5px solid transparent;border-top:6px solid #e6e6e6;border-bottom:0"></div>
</div>
<div id="status" class="abs">
<svg class="abs" style="left:11px;top:3px" width="16" height="14" viewBox="0 0 16 14"><path d="M1 4v9h11V9" fill="none" stroke="#c8c8c8" stroke-width="1.600"/><path d="M5 9q1-5 6-5V1l4 4.500-4 4.500V7q-4 0-6 2z" fill="#c8c8c8"/></svg>
<div class="abs" style="left:41px;top:3px;width:56px;height:16px;background:#8a8a8a;color:#4a4a4a;font-size:10.500px;line-height:16px;padding-left:3px">97%</div>
<div class="abs" style="left:103px;top:9px;border:4px solid transparent;border-top:5px solid #d8d8d8;border-bottom:0"></div>
<div class="abs" style="left:125px;top:4px;font-size:9px;color:#5e5e5e;letter-spacing:8px">&#9664;&#9664;</div>
<div class="abs" style="left:165px;top:3px;width:46px;height:16px;background:#8a8a8a;color:#4a4a4a;font-size:10.500px;line-height:16px;padding-left:4px">1</div>
<div class="abs" style="left:216px;top:9px;border:4px solid transparent;border-top:5px solid #d8d8d8;border-bottom:0"></div>
<div class="abs" style="left:240px;top:4px;font-size:9px;color:#5e5e5e;letter-spacing:8px">&#9654;&#9654;</div>
<div class="abs" style="left:364px;top:4px;font-size:11px;font-weight:bold;color:#d0d0d0">Selection</div>
<div class="abs" style="left:512px;top:5px;border:4.500px solid transparent;border-left:6px solid #e8e8e8;border-right:0"></div>
<div class="abs" style="left:522px;top:0;width:524px;height:19px;background:#2a2a2a"></div>
<div class="abs" style="left:530px;top:5px;border:4.500px solid transparent;border-right:6px solid #e8e8e8;border-left:0"></div>
<div class="abs" style="left:801px;top:2px;width:17px;height:16px;background:#7e7e7e"></div>
<div class="abs" style="left:1011px;top:5px;border:4.500px solid transparent;border-left:6px solid #e8e8e8;border-right:0"></div>
<div class="abs" style="left:1025px;top:0;width:21px;height:19px;background:#3a3a3a"></div>
</div>
<div id="rpanel" class="abs">
<div class="abs" style="left:0;top:0;width:274px;height:13px;background:#2b2b2b"></div>
<div class="abs" style="left:261px;top:5px;font-size:8px;color:#aaa;letter-spacing:-2px">&#9654;&#9654;</div>
<div class="abs" style="left:0;top:13px;width:274px;height:19px;background:#343434"></div>
<div class="abs ptab" style="left:8px;top:13px;width:76px">Opacity Brus</div>
<div class="abs ptab act" style="left:85px;top:13px;width:59px">Texture</div>
<div class="abs ptab" style="left:150px;top:13px;width:78px">Texture Brus</div>
<svg class="abs" style="left:252px;top:18px" width="18" height="10" viewBox="0 0 18 10"><g fill="#b5b5b5"><path d="M0 2h5l-2.500 3.500z"/><rect x="7" y="0" width="9" height="2"/><rect x="7" y="3.500" width="9" height="2"/><rect x="7" y="7" width="9" height="2"/></g></svg>
<div class="abs" style="left:1px;top:32px;width:272px;height:22px;background:linear-gradient(90deg,#ee1561 0,#ea1a62 14%,#a93460 24%,#a2345c 100%)"></div>
<svg class="abs" style="left:9px;top:36px" width="24" height="14" viewBox="0 0 24 14"><path d="M2 11L1 3l5 4 6-6 6 6 5-4-1 8z M2 12h20v2H2z" fill="#7a0a32"/></svg>
<div class="abs" style="left:261px;top:37px;width:7px;height:13px;background:#6e1f3e"></div>
<svg class="abs" style="left:20px;top:68px" width="240" height="26" viewBox="0 0 240 26">
<g fill="#6f6f6f"><path d="M6 2h6v8h8v6h-8v8h-6v-8h-8v-6h8z" transform="translate(0.500,0)"/>
<path d="M52 4h5v20h-5zM75 4h5v20h-5zM59 8l6 6-6 6zM73 8l-6 6 6 6z" transform="translate(-4,0)"/>
<path d="M110 4h16q6 0 6 6v6q0 6-6 6h-18v-4h17q3 0 3-3v-4q0-3-3-3h-15z M112 1v10l-7-5z" transform="translate(-3,0)"/>
<path d="M151 5l4-3 6 7 6-7 4 3-7 8 7 8-4 3-6-7-6 7-4-3 7-8z" transform="translate(7.500,0)"/></g>
<g fill="#e2e2e2" transform="translate(9,0)"><path d="M206 1h14v4h3l-10 8-10-8h3z"/><path d="M198 14h24q5 0 5 5t-5 5h-24q-4 0-4-5t4-5z M199 17q-2 0-2 2t2 2h22v-4z" fill-rule="evenodd"/><rect x="203" y="11" width="24" height="3"/></g>
</svg>
<div class="abs" style="left:15px;top:107px;width:242px;height:1px;background:#383838"></div>
<div class="abs cb" style="left:12px;top:117px"></div><div class="abs lbl" style="left:30px;top:117px">Gray</div>
<div class="abs cb" style="left:69px;top:117px"></div><div class="abs lbl" style="left:88px;top:117px">Color</div>
<div class="abs cb" style="left:129px;top:117px"></div><div class="abs lbl" style="left:149px;top:117px">Nonrepeating</div>
<div class="abs lbl" style="left:9px;top:143px">Category:</div>
<div class="abs sel" style="left:72px;top:141px;width:189px">All</div>
<div class="abs lbl" style="left:0;top:172px;width:272px;text-align:center;font-size:12.300px;letter-spacing:.3px">Matched 112 of 112</div>
<div class="abs" style="left:15px;top:201px;border:4.500px solid transparent;border-right:6px solid #e8e8e8;border-left:0"></div>
<div class="abs sel" style="left:33px;top:197px;width:206px">house-render-a</div>
<div class="abs" style="left:251px;top:201px;border:4.500px solid transparent;border-left:6px solid #e8e8e8;border-right:0"></div>
<svg class="abs" style="left:10px;top:225px" width="254" height="252" viewBox="0 0 254 252">
<defs><pattern id="chk" width="18" height="18" patternUnits="userSpaceOnUse"><rect width="18" height="18" fill="#fdfdfd"/><rect x="9" width="9" height="9" fill="#c9c9c9"/><rect y="9" width="9" height="9" fill="#c9c9c9"/></pattern>
<filter id="paper" x="0" y="0" width="100%" height="100%"><feTurbulence type="fractalNoise" baseFrequency="0.011 0.017" numOctaves="4" seed="11" result="n"/><feDiffuseLighting in="n" surfaceScale="11" diffuseConstant="1.120" lighting-color="#d8d8d8" result="l"><feDistantLight azimuth="235" elevation="58"/></feDiffuseLighting></filter></defs>
<rect width="254" height="252" fill="url(#chk)"/>
<rect y="44" width="254" height="165" fill="#d5d5d5" filter="url(#paper)"/>
<path d="M19 233.500l1.800 4.800 5.100.2-4 3.200 1.400 4.900-4.300-2.800-4.300 2.800 1.400-4.900-4-3.200 5.100-.2z" fill="#fff" stroke="#222" stroke-width="1.200" transform="translate(-3.800,-54) scale(1.2)"/>
<g fill="none" stroke="#222" stroke-width="1.600" transform="translate(0,-6)"><circle cx="235" cy="239" r="6" fill="#e8e8e8"/><path d="M232 239h6M235 236v6M239.500 243.500l4 4" /></g>
</svg>
<div class="abs lbl" style="left:10px;top:485px;color:#cfcfcf">Grayscale</div>
<div class="abs lbl" style="left:101px;top:485px;color:#cfcfcf;letter-spacing:.6px">5616 x 3744</div>
<div class="abs lbl" style="left:190px;top:485px;color:#cfcfcf">Nonrepeating</div>
<div class="abs lbl" style="left:10px;top:519px;color:#9c9c9c;font-weight:normal;font-size:12.300px">Current Texture:</div>
<div class="abs sel" style="left:108px;top:516px;width:154px;background:#575757;color:#c4c4c4">house-render-a</div>
<div class="abs" style="left:0;top:544px;width:274px;height:4px;background:#2c2c2c"></div>
<div class="abs" style="left:0;top:548px;width:274px;height:19px;background:#343434"></div>
<div class="abs ptab act" style="left:2px;top:548px;width:51px;color:#fff">Layers</div>
<div class="abs ptab" style="left:60px;top:548px;width:82px">Transparency</div>
<div class="abs ptab" style="left:152px;top:548px;width:72px">Appearance</div>
<svg class="abs" style="left:252px;top:553px" width="18" height="10" viewBox="0 0 18 10"><g fill="#b5b5b5"><path d="M0 2h5l-2.500 3.500z"/><rect x="7" y="0" width="9" height="2"/><rect x="7" y="3.500" width="9" height="2"/><rect x="7" y="7" width="9" height="2"/></g></svg>
</div>
<div id="dock" class="abs">
<div class="abs" style="left:0;top:0;width:32px;height:13px;background:#2b2b2b"></div>
<div class="abs" style="left:0;top:124px;width:32px;height:5px;background:#2e2e2e"></div>
<div class="abs" style="left:0;top:232px;width:32px;height:5px;background:#2e2e2e"></div>
<div class="abs" style="left:0;top:309px;width:32px;height:5px;background:#2e2e2e"></div>
<div class="abs" style="left:0;top:356px;width:32px;height:5px;background:#2e2e2e"></div>
<div class="abs" style="left:0;top:396px;width:32px;height:3px;background:#2e2e2e"></div>
<div class="abs" style="left:0;top:399px;width:32px;height:306px;background:#3c3c3c"></div>
<div class="abs grip" style="top:17px"></div><div class="abs grip" style="top:133px"></div><div class="abs grip" style="top:241px"></div><div class="abs grip" style="top:318px"></div><div class="abs grip" style="top:365px"></div>
<svg class="abs" style="left:5px;top:26px" width="30" height="380" viewBox="0 0 30 380"><g fill="#d4d4d4" stroke="none">
<path d="M5 16q0-7 11-7.500 12 0 12 7 0 6-6 5-3-1-4 1.500-1 2-5 1-8-2-8-7z"/><circle cx="18" cy="8" r="4.500"/><circle cx="11" cy="16" r="1.600" fill="#464646"/><circle cx="17" cy="18" r="1.600" fill="#464646"/><circle cx="23" cy="15" r="1.600" fill="#464646"/>
<path d="M7 38v18h22q-2-16-22-18z"/>
<circle cx="14" cy="79" r="8" fill="none" stroke="#d4d4d4" stroke-width="2"/><circle cx="14" cy="79" r="3"/><circle cx="25" cy="70" r="3"/><circle cx="25" cy="89" r="3"/>
<rect x="6" y="116" width="22" height="17" fill="none" stroke="#d4d4d4" stroke-width="2"/><path d="M6 122h22M13 116v17M20 116v17" stroke="#d4d4d4" stroke-width="2"/>
<path d="M10 158h10v11h-10zM9 146l3 9M15 144v11M21 146l-3 9" stroke="#d4d4d4" stroke-width="2.400"/>
<circle cx="14" cy="184" r="5"/><circle cx="8.500" cy="192" r="5"/><circle cx="19.500" cy="192" r="5"/><path d="M12 192h4l2 8h-8z"/>
<rect x="8" y="229" width="22" height="3"/><rect x="8" y="235" width="22" height="4"/><rect x="8" y="242" width="22" height="5"/>
</g>
<defs><linearGradient id="dg"><stop offset="0" stop-color="#222"/><stop offset="1" stop-color="#ddd"/></linearGradient></defs>
<rect x="9" y="259" width="21" height="16" fill="url(#dg)" stroke="#d4d4d4" stroke-width="1.600"/>
<rect x="14" y="305" width="16" height="14" rx="2" fill="#777" stroke="#d4d4d4" stroke-width="2"/><rect x="8" y="312" width="13" height="12" rx="2" fill="#555" stroke="#d4d4d4" stroke-width="2"/><circle cx="11" cy="322" r="3" fill="#d4d4d4"/>
<rect x="9" y="349" width="14" height="13" rx="2" fill="none" stroke="#d4d4d4" stroke-width="2"/><rect x="15" y="356" width="15" height="13" rx="2" fill="#666" stroke="#d4d4d4" stroke-width="2"/>
</svg>
</div>
<svg class="abs" style="left:0;top:0;pointer-events:none" width="1436" height="811" viewBox="0 0 1436 811"><path d="M206.500 467.500V489.500L211.500 485L215.500 494.500L219.500 493L215.500 483.500L222 483Z" fill="#0a0a0a" stroke="#fff" stroke-width=".8"/></svg>
</div></div>
<svg class="abs" style="left:0;top:0;pointer-events:none" width="1436" height="811" viewBox="0 0 1436 811"><g font-family="Liberation Sans, sans-serif" font-weight="bold" fill="rgba(255,255,255,.12)" stroke="#8e8e8e" stroke-width=".7" opacity=".6"><text x="385" y="75" transform="rotate(45 385 75)" text-anchor="middle" font-size="19">3D66.COM</text><text x="225" y="228" transform="rotate(45 225 228)" text-anchor="middle" font-size="19">3D66.COM</text><text x="65" y="385" transform="rotate(45 65 385)" text-anchor="middle" font-size="19">3D66.COM</text><text x="995" y="60" transform="rotate(45 995 60)" text-anchor="middle" font-size="19">3D66.COM</text><text x="840" y="225" transform="rotate(45 840 225)" text-anchor="middle" font-size="19">3D66.COM</text><text x="690" y="383" transform="rotate(45 690 383)" text-anchor="middle" font-size="19">3D66.COM</text><text x="530" y="535" transform="rotate(45 530 535)" text-anchor="middle" font-size="19">3D66.COM</text><text x="380" y="695" transform="rotate(45 380 695)" text-anchor="middle" font-size="19">3D66.COM</text><text x="1310" y="375" transform="rotate(45 1310 375)" text-anchor="middle" font-size="19">3D66.COM</text><text x="1160" y="528" transform="rotate(45 1160 528)" text-anchor="middle" font-size="19">3D66.COM</text><text x="1000" y="690" transform="rotate(45 1000 690)" text-anchor="middle" font-size="19">3D66.COM</text><text x="1460" y="220" transform="rotate(45 1460 220)" text-anchor="middle" font-size="19">3D66.COM</text><text x="540" y="225" transform="rotate(-45 540 225)" text-anchor="middle" font-size="13" font-family="Liberation Sans, Noto Sans CJK SC, sans-serif">3D溜溜网-溜溜自学网</text><text x="390" y="380" transform="rotate(-45 390 380)" text-anchor="middle" font-size="13" font-family="Liberation Sans, Noto Sans CJK SC, sans-serif">3D溜溜网-溜溜自学网</text><text x="230" y="535" transform="rotate(-45 230 535)" text-anchor="middle" font-size="13" font-family="Liberation Sans, Noto Sans CJK SC, sans-serif">3D溜溜网-溜溜自学网</text><text x="75" y="690" transform="rotate(-45 75 690)" text-anchor="middle" font-size="13" font-family="Liberation Sans, Noto Sans CJK SC, sans-serif">3D溜溜网-溜溜自学网</text><text x="1005" y="385" transform="rotate(-45 1005 385)" text-anchor="middle" font-size="13" font-family="Liberation Sans, Noto Sans CJK SC, sans-serif">3D溜溜网-溜溜自学网</text><text x="850" y="540" transform="rotate(-45 850 540)" text-anchor="middle" font-size="13" font-family="Liberation Sans, Noto Sans CJK SC, sans-serif">3D溜溜网-溜溜自学网</text><text x="700" y="695" transform="rotate(-45 700 695)" text-anchor="middle" font-size="13" font-family="Liberation Sans, Noto Sans CJK SC, sans-serif">3D溜溜网-溜溜自学网</text><text x="1170" y="230" transform="rotate(-45 1170 230)" text-anchor="middle" font-size="13" font-family="Liberation Sans, Noto Sans CJK SC, sans-serif">3D溜溜网-溜溜自学网</text><text x="1330" y="70" transform="rotate(-45 1330 70)" text-anchor="middle" font-size="13" font-family="Liberation Sans, Noto Sans CJK SC, sans-serif">3D溜溜网-溜溜自学网</text><text x="700" y="65" transform="rotate(-45 700 65)" text-anchor="middle" font-size="13" font-family="Liberation Sans, Noto Sans CJK SC, sans-serif">3D溜溜网-溜溜自学网</text><text x="90" y="70" transform="rotate(-45 90 70)" text-anchor="middle" font-size="13" font-family="Liberation Sans, Noto Sans CJK SC, sans-serif">3D溜溜网-溜溜自学网</text><text x="1320" y="690" transform="rotate(-45 1320 690)" text-anchor="middle" font-size="13" font-family="Liberation Sans, Noto Sans CJK SC, sans-serif">3D溜溜网-溜溜自学网</text></g><g stroke="#9a9a9a" stroke-width=".8" opacity=".45"><path d="M450 140L520 210"/><path d="M560 135L690 265"/><path d="M1203 796L1261 738"/><path d="M1359 739L1416 797"/><path d="M1050 430L1120 500"/><path d="M500 740L560 800"/><path d="M180 400L260 480"/><path d="M880 110L960 190"/><path d="M1290 130L1436 276"/><path d="M330 530L550 310"/><path d="M790 580L900 470"/><path d="M1130 580L1230 480"/><path d="M960 800L1090 670"/></g></svg>
</body>
</html>
